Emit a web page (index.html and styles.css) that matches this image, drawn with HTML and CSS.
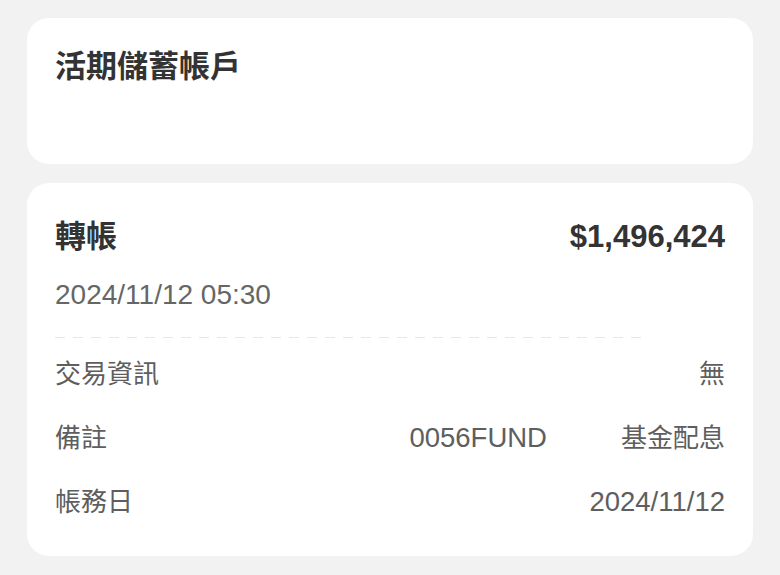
FILE: index.html
```html
<!DOCTYPE html>
<html lang="zh-Hant">
<head>
<meta charset="utf-8">
<title>活期儲蓄帳戶</title>
<link rel="stylesheet" href="styles.css">
</head>
<body>
<main class="page">
  <section class="card account">
    <h1 class="account-title">活期儲蓄帳戶</h1>
  </section>
  <section class="card detail">
    <div class="detail-head">
      <h2 class="detail-type">轉帳</h2>
      <div class="detail-amount">$1,496,424</div>
    </div>
    <div class="detail-time">2024/11/12 05:30</div>
    <div class="dash"></div>
    <div class="rows">
      <div class="row">
        <span class="label">交易資訊</span>
        <span class="value cjk">無</span>
      </div>
      <div class="row">
        <span class="label">備註</span>
        <span class="value-group">
          <span class="value num">0056FUND</span>
          <span class="value cjk">基金配息</span>
        </span>
      </div>
      <div class="row">
        <span class="label">帳務日</span>
        <span class="value num">2024/11/12</span>
      </div>
    </div>
  </section>
</main>
</body>
</html>
```

FILE: styles.css
```css
* { box-sizing: border-box; }
html, body {
  margin: 0;
  padding: 0;
  background: #f2f2f2;
}
body {
  font-family: "Liberation Sans", "Noto Sans CJK TC", sans-serif;
  color: #333;
}
.page {
  padding: 18px 27px 0 27px;
  display: flex;
  flex-direction: column;
  gap: 19px;
}
.card {
  background: #fff;
  border-radius: 22px;
}
.account {
  height: 146px;
  padding: 31px 28px 0 28px;
}
.account-title {
  margin: 0;
  font-size: 31px;
  line-height: 36px;
  font-weight: 700;
  color: #333;
}
.detail {
  height: 373px;
  padding: 36px 28px 0 28px;
}
.detail-head {
  display: flex;
  justify-content: space-between;
  align-items: center;
  height: 36px;
}
.detail-type {
  margin: 0;
  font-size: 31px;
  line-height: 36px;
  font-weight: 700;
  color: #333;
}
.detail-amount {
  font-size: 31px;
  line-height: 36px;
  font-weight: 700;
  color: #333;
}
.detail-time {
  margin-top: 24px;
  font-size: 28px;
  line-height: 32px;
  color: #666;
}
.dash {
  margin-top: 26px;
  width: 590px;
  height: 1px;
  background: repeating-linear-gradient(to right, #e6e6e6 0 10px, transparent 10px 18px);
}
.rows {
  margin-top: 4px;
}
.row {
  display: flex;
  justify-content: space-between;
  align-items: center;
  height: 64px;
  color: #5e5e5e;
}
.label {
  font-size: 26px;
  line-height: 32px;
}
.value-group {
  display: flex;
  align-items: center;
  gap: 74px;
}
.value.cjk {
  font-size: 26px;
  line-height: 32px;
}
.value.num {
  font-size: 27.5px;
  line-height: 32px;
}
```
